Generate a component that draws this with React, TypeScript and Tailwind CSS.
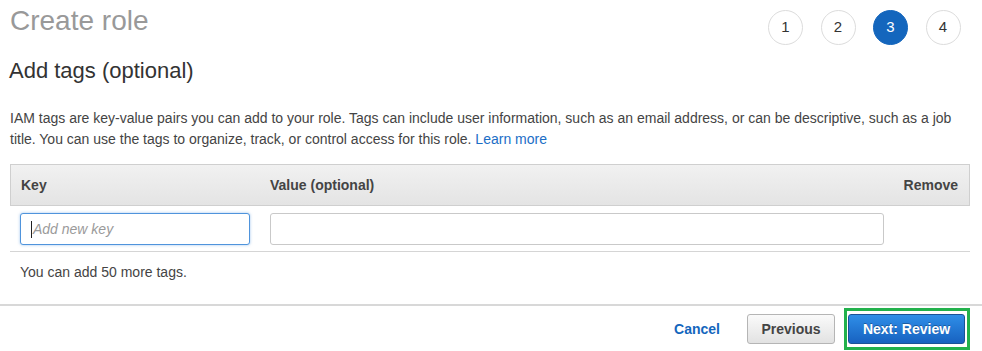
import React from "react";

const font = { fontFamily: '"Liberation Sans", Arial, sans-serif' };

function Step({ n, active }: { n: number; active?: boolean }) {
  return (
    <div
      className={
        "w-[35px] h-[35px] rounded-full flex items-center justify-center text-[15px] " +
        (active
          ? "bg-[#1466bd] text-white border border-[#1466bd]"
          : "bg-white text-[#333] border border-[#dcdcdc]")
      }
    >
      {n}
    </div>
  );
}

export default function App() {
  return (
    <div className="w-[982px] h-[351px] bg-white overflow-hidden" style={font}>
      <div className="pl-[10px] pr-[12px]">
        <div className="flex items-start justify-between pt-[5px]">
          <h1 className="text-[28px] leading-[32px] text-[#999] font-normal">Create role</h1>
          <div className="flex gap-[17.5px] mt-[5px] mr-[9.5px]">
            <Step n={1} />
            <Step n={2} />
            <Step n={3} active />
            <Step n={4} />
          </div>
        </div>
        <h2 className="mt-[12px] -ml-px text-[22px] leading-[28px] text-[#333] font-normal">
          Add tags (optional)
        </h2>
        <p className="mt-[23px] text-[14px] leading-[21px] text-[#444]">
          IAM tags are key-value pairs you can add to your role. Tags can include user information, such as an
          email address, or can be descriptive, such as a job title. You can use the tags to organize, track, or
          control access for this role. <span className="text-[#1b6ec6]">Learn more</span>
        </p>

        <div className="mt-[14px]">
          <div className="flex h-[42px] items-center border border-[#cfcfcf] bg-linear-to-b from-[#f1f1f1] to-[#e4e4e4] text-[14px] font-bold text-[#444]">
            <div className="w-[249px] pl-[10px]">Key</div>
            <div className="flex-1 pl-[10px]">Value (optional)</div>
            <div className="w-[90px] pr-[11px] text-right">Remove</div>
          </div>
          <div className="flex border-b border-[#d5d5d5] pt-[7px] pb-[6px]">
            <div className="w-[250px] pl-[10px] pr-[10px]">
              <div className="h-[32px] rounded-[3px] border border-[#4f94dc] shadow-[0_0_3px_rgba(79,148,220,0.55)] bg-white flex items-center pl-[10px]">
                <span className="w-px h-[17px] bg-[#222] mr-px" />
                <span className="text-[14px] italic text-[#9a9a9a]">Add new key</span>
              </div>
            </div>
            <div className="flex-1 pl-[10px] pr-[10px]">
              <div className="h-[32px] rounded-[3px] border border-[#c9c9c9] bg-white" />
            </div>
            <div className="w-[76px]" />
          </div>
        </div>

        <p className="mt-[10px] pl-[10px] text-[14px] leading-[21px] text-[#444]">You can add 50 more tags.</p>
      </div>

      <div className="mt-[21px] border-t-2 border-[#d8d8d8] pt-[2px] flex items-center justify-end pr-[12px]">
        <span className="text-[14px] font-bold text-[#1466bd] mr-[27px]">Cancel</span>
        <button className="h-[30px] w-[88px] rounded-[3px] border border-[#b5b5b5] bg-linear-to-b from-[#fafafa] to-[#e2e2e2] text-[14px] font-bold text-[#444] mr-[9px]">
          Previous
        </button>
        <div className="border-[3px] border-[#22b14c] pl-px pr-[2px] py-[3px]">
          <button className="h-[30px] w-[117px] rounded-[3px] border border-[#1b5296] bg-linear-to-b from-[#2f8ee8] to-[#1862c0] text-[14px] font-bold text-white [text-shadow:0_-1px_0_rgba(0,0,0,0.3)]">
            Next: Review
          </button>
        </div>
      </div>
    </div>
  );
}
